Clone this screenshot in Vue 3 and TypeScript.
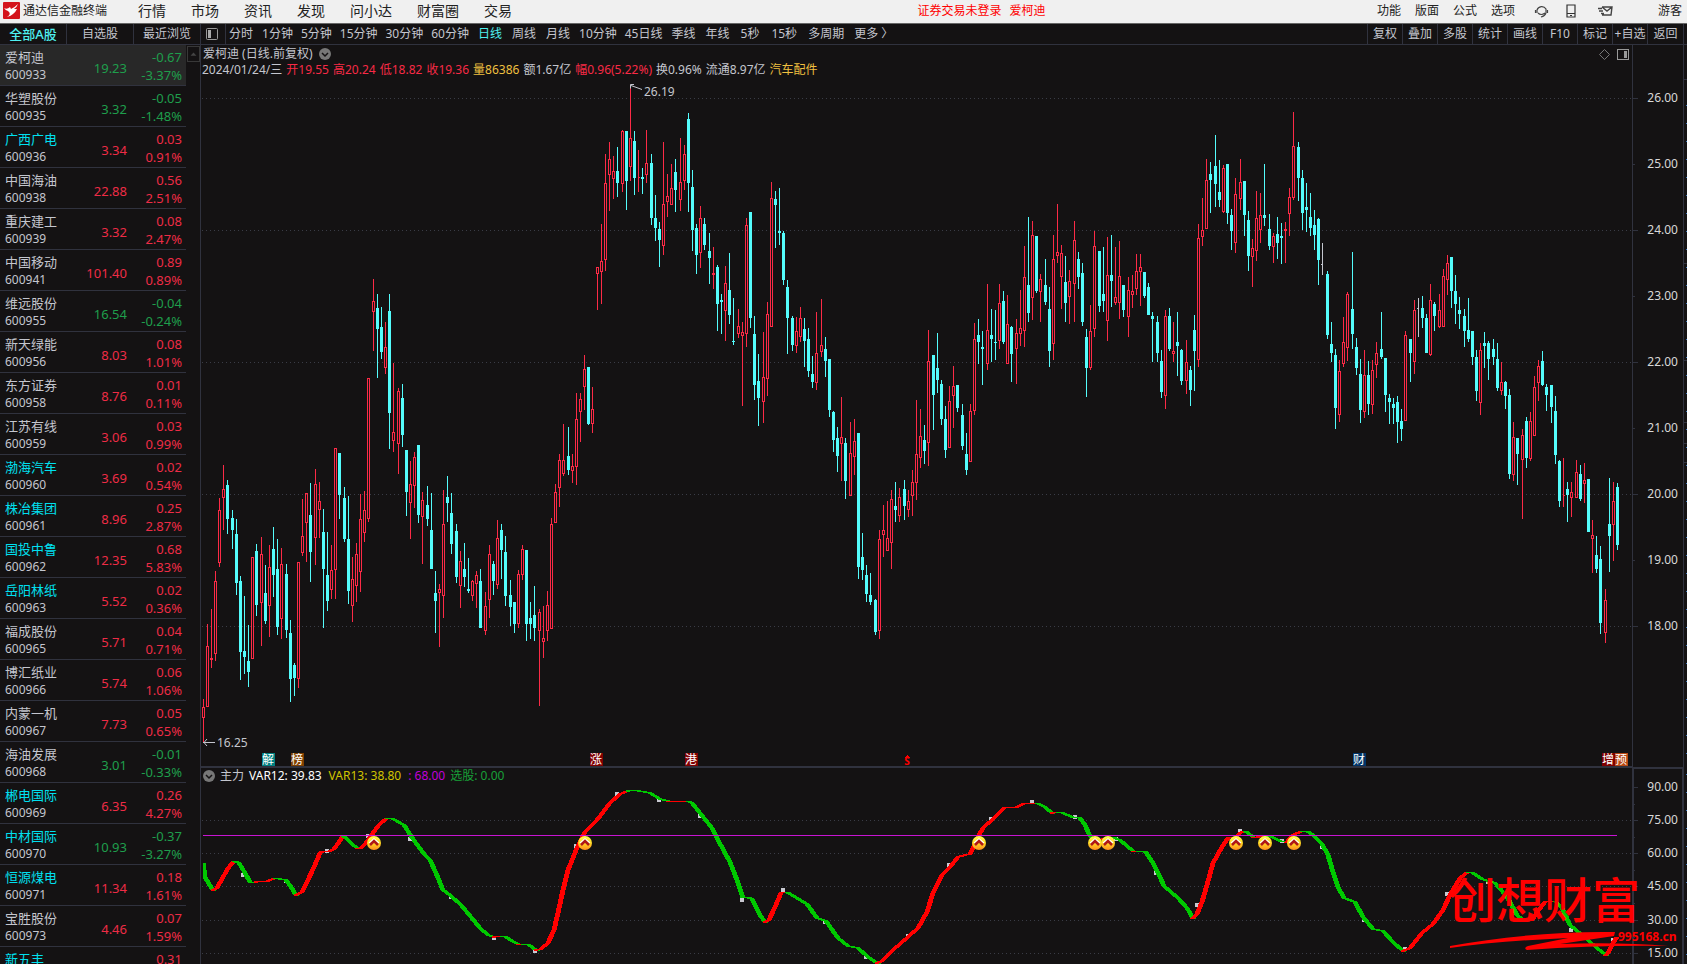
<script setup lang="ts">
interface Stock { name: string; code: string; price: string; diff: string; pct: string; own?: boolean }
interface Badge { x: number; text: string; cls: string }
interface Stroke { kind: string; d: string }

const menus = ['行情', '市场', '资讯', '发现', '问小达', '财富圈', '交易']
const tools = ['功能', '版面', '公式', '选项']
const tabs = ['全部A股', '自选股', '最近浏览']
const periods = ['分时', '1分钟', '5分钟', '15分钟', '30分钟', '60分钟', '日线', '周线', '月线', '10分钟', '45日线', '季线', '年线', '5秒', '15秒', '多周期', '更多 〉']
const actions = ['复权', '叠加', '多股', '统计', '画线', 'F10', '标记', '+自选', '返回']

const periodClass = (p: string): string => {
  if (p.endsWith('秒')) return 'sec'
  return /\d/.test(p) ? '' : 'word'
}

const stockRows = `爱柯迪 600933 19.23 -0.67 -3.37%
华塑股份 600935 3.32 -0.05 -1.48%
广西广电 600936 3.34 0.03 0.91% *
中国海油 600938 22.88 0.56 2.51%
重庆建工 600939 3.32 0.08 2.47%
中国移动 600941 101.40 0.89 0.89%
维远股份 600955 16.54 -0.04 -0.24%
新天绿能 600956 8.03 0.08 1.01%
东方证券 600958 8.76 0.01 0.11%
江苏有线 600959 3.06 0.03 0.99%
渤海汽车 600960 3.69 0.02 0.54% *
株冶集团 600961 8.96 0.25 2.87% *
国投中鲁 600962 12.35 0.68 5.83% *
岳阳林纸 600963 5.52 0.02 0.36% *
福成股份 600965 5.71 0.04 0.71%
博汇纸业 600966 5.74 0.06 1.06%
内蒙一机 600967 7.73 0.05 0.65%
海油发展 600968 3.01 -0.01 -0.33%
郴电国际 600969 6.35 0.26 4.27% *
中材国际 600970 10.93 -0.37 -3.27% *
恒源煤电 600971 11.34 0.18 1.61% *
宝胜股份 600973 4.46 0.07 1.59%`
const stocks: Stock[] = stockRows.split('\n').map((line) => {
  const [name, code, price, diff, pct, mark] = line.split(' ')
  return { name, code, price, diff, pct, own: mark === '*' }
})
stocks.push({ name: '新五丰', code: '', price: '', diff: '0.31', pct: '', own: true })

const quote = [
  { t: '2024/01/24/三', c: 'plain' }, { t: '开19.55', c: 'up' }, { t: '高20.24', c: 'up' }, { t: '低18.82', c: 'up' },
  { t: '收19.36', c: 'up' }, { t: '量86386', c: 'gold' }, { t: '额1.67亿', c: 'plain' }, { t: '幅0.96(5.22%)', c: 'up' },
  { t: '换0.96%', c: 'plain' }, { t: '流通8.97亿', c: 'plain' }, { t: '汽车配件', c: 'gold' },
]

/* x, high, body top, body bottom, low, direction (u up, d down, f flat) */
const candles = `203 699 707 718 743 u,207 624 646 707 707 u,211 609 658 660 668 u,215 571 581 654 661 u,219 498 510 563 567 u
223 465 489 498 530 u,227 480 485 519 534 d,232 510 518 530 549 d,236 519 534 583 595 d,240 576 581 652 680 d
244 596 651 657 674 d,248 625 661 672 687 d,252 557 557 659 659 u,256 544 551 605 616 d,261 537 554 603 646 u
265 565 593 621 624 d,269 545 567 606 637 u,273 527 549 575 597 d,277 539 569 627 635 d,281 548 564 619 639 u
286 564 574 630 638 d,290 620 633 679 702 d,294 663 665 678 696 d,298 562 562 679 688 u,302 499 536 553 556 u
306 493 493 523 562 u,310 483 515 552 582 d,315 469 484 538 565 u,319 482 501 510 538 u,323 509 532 569 628 d
327 532 575 601 611 d,331 545 570 590 599 u,335 448 448 570 599 u,339 453 453 495 519 d,344 487 498 539 542 d
348 496 539 591 604 d,352 557 579 606 622 u,356 543 554 586 602 u,360 494 519 572 592 u,364 491 510 533 542 u
368 378 378 519 522 u,373 279 301 312 351 u,377 294 308 329 378 d,381 307 327 352 359 d,385 322 347 368 374 u
389 294 311 413 449 d,393 363 432 441 452 u,398 388 391 444 474 u,402 384 398 435 447 d,406 450 450 492 516 d
410 461 484 503 539 u,414 452 457 486 508 u,418 445 445 515 523 d,422 492 500 517 564 u,427 486 505 519 526 d
431 493 530 569 569 d,435 571 593 601 633 d,439 584 589 593 647 u,443 490 524 596 618 u,447 476 497 503 522 d
451 493 513 544 554 d,456 524 531 577 583 d,460 551 561 586 608 u,464 543 569 577 587 d,468 558 589 591 593 d
472 580 581 596 601 u,476 571 575 584 608 u,480 569 581 628 628 d,485 592 606 631 635 u,489 545 554 600 618 u
493 561 564 581 595 d,497 520 538 585 589 u,501 524 530 550 579 d,505 536 552 596 606 d,510 580 595 607 626 d
514 602 602 624 633 d,518 570 574 624 628 u,522 545 549 575 580 u,526 550 550 624 641 d,530 602 618 624 639 d
534 586 615 628 641 d,539 609 612 631 706 u,543 606 638 642 658 u,547 591 605 631 641 u,551 518 524 629 629 u
555 484 492 523 523 u,559 454 460 488 507 u,563 424 460 474 476 u,568 427 456 470 475 d,572 454 466 471 483 u
576 393 419 467 485 u,580 393 399 412 442 u,584 355 369 387 410 u,588 367 367 424 425 d,592 387 409 424 433 u
597 267 267 274 310 u,601 224 261 272 304 u,605 154 183 260 271 u,609 142 159 175 211 u,613 156 171 179 199 u
617 147 171 183 197 d,622 130 131 184 192 u,626 131 131 181 210 d,630 87 138 167 181 u,634 131 141 178 195 d
638 150 177 178 192 u,642 168 177 179 194 d,646 130 163 175 183 u,651 154 163 218 225 d,655 195 218 228 241 d
659 222 229 240 267 d,663 142 204 246 255 u,667 174 196 202 217 u,671 164 188 205 205 u,675 159 172 190 212 d
680 138 182 200 211 u,684 145 154 181 190 u,688 113 119 183 212 d,692 170 187 230 251 d,696 224 228 255 274 d
700 206 218 253 268 u,704 218 224 245 250 d,709 233 251 258 284 d,713 247 273 275 289 u,717 265 267 304 331 d
721 294 300 302 334 d,725 266 283 311 341 u,729 253 290 315 324 d,733 298 341 342 345 d,738 309 326 334 338 u
742 322 332 336 406 u,746 218 225 334 347 u,750 212 212 318 328 d,754 316 334 385 400 d,758 354 381 398 426 d
763 332 377 402 423 u,767 302 314 379 396 u,771 182 198 327 327 u,775 191 199 205 248 d,779 188 231 233 245 d
783 231 233 280 285 d,787 280 287 318 354 d,792 316 318 345 351 d,796 317 331 346 353 u,800 307 318 337 342 u
804 318 329 341 367 d,808 328 339 371 377 d,812 356 374 382 388 d,816 312 353 383 390 u,821 299 345 352 357 u
825 337 349 361 377 d,829 359 359 410 417 d,833 411 412 440 452 d,837 427 438 456 472 d,841 397 437 444 481 u
845 438 443 481 499 d,850 422 453 496 496 u,854 419 441 457 475 u,858 433 433 567 579 d,862 533 557 570 580 d
866 565 575 594 602 d,870 573 595 602 605 d,875 599 600 632 635 d,879 530 539 631 639 u,883 505 530 535 557 u
887 501 538 551 551 u,891 490 499 543 569 u,895 482 506 510 522 d,899 488 497 516 522 u,904 480 489 506 520 d
908 490 501 510 517 u,912 470 482 496 516 u,916 400 454 483 500 u,920 409 436 458 468 u,924 425 440 451 464 d
928 330 361 443 466 u,933 355 355 395 430 d,937 333 368 380 393 d,941 380 384 419 425 d,945 406 419 450 458 d
949 386 401 448 448 u,953 366 386 396 428 u,957 385 385 408 412 d,962 404 415 446 450 d,966 433 454 470 475 d
970 404 411 462 462 u,974 323 339 411 415 u,978 319 335 342 364 d,982 331 347 349 385 d,987 284 330 364 370 u
991 309 335 339 362 d,995 310 342 343 360 d,999 284 303 341 349 u,1003 291 301 342 344 d,1007 295 324 364 364 u
1011 326 327 354 382 d,1016 319 333 349 384 u,1020 290 328 334 346 u,1024 246 277 331 347 u,1028 217 285 313 322 d
1032 221 235 298 320 u,1036 236 236 291 293 d,1040 274 279 292 322 u,1045 259 285 302 305 d,1049 287 309 351 367 d
1053 235 259 344 360 u,1057 204 252 256 263 u,1061 245 253 277 309 u,1065 256 282 303 322 d,1069 270 281 297 324 u
1074 221 240 284 322 u,1078 252 259 277 289 d,1082 263 273 322 326 d,1086 329 337 368 397 d,1090 305 331 368 370 u
1094 231 246 329 337 u,1099 251 251 306 312 d,1103 247 294 301 312 d,1107 237 275 321 341 u,1111 235 275 281 307 d
1115 247 297 303 305 u,1119 241 276 303 319 u,1123 285 285 310 317 d,1128 277 290 317 337 u,1132 275 291 295 308 u
1136 254 271 289 295 u,1140 254 267 272 306 u,1144 272 272 296 298 d,1148 283 287 315 315 d,1152 312 316 319 362 d
1157 316 322 353 362 d,1161 350 361 392 398 d,1165 310 316 396 409 u,1169 308 316 349 351 d,1173 322 351 354 362 u
1177 312 342 346 376 d,1181 349 350 381 385 d,1186 340 362 381 394 u,1190 366 370 390 406 d,1194 315 330 351 391 d
1198 224 238 360 367 u,1202 198 230 237 246 u,1206 159 180 229 229 u,1210 162 174 180 213 d,1215 135 166 184 207 d
1219 160 192 200 207 d,1223 165 168 212 213 u,1227 164 164 213 224 d,1231 209 215 231 250 d,1235 178 194 243 253 u
1240 159 182 199 210 u,1244 181 181 215 236 d,1248 211 220 256 271 d,1252 239 248 257 287 u,1256 191 218 251 261 u
1260 193 215 230 243 u,1264 164 215 218 226 d,1269 214 229 246 250 d,1273 233 236 247 263 u,1277 217 234 243 259 d
1281 223 236 238 264 d,1285 222 229 231 263 u,1289 188 197 214 236 u,1293 112 146 198 200 u,1298 142 147 178 201 d
1302 170 178 213 230 d,1306 183 207 210 232 d,1310 193 217 228 236 d,1314 210 225 235 250 d,1318 218 219 260 285 d
1322 243 264 265 275 f,1327 271 274 335 339 d,1331 322 344 353 362 d,1335 349 355 408 429 d,1339 360 371 415 422 u
1343 317 342 364 367 u,1347 292 294 348 361 u,1352 252 309 334 349 d,1356 338 347 368 375 d,1360 359 374 410 423 d
1364 350 375 412 418 u,1368 361 375 404 415 d,1372 360 370 405 414 u,1376 342 353 365 378 u,1381 312 349 357 359 d
1385 358 358 395 412 d,1389 394 398 402 424 d,1393 398 404 408 424 d,1397 396 402 422 443 d,1401 409 421 429 441 d
1405 331 335 421 421 u,1410 339 339 353 382 d,1414 300 310 362 374 u,1418 298 308 309 337 f,1422 296 308 318 328 d
1426 314 318 353 353 d,1430 284 300 355 356 u,1434 302 304 316 331 d,1439 294 310 327 328 u,1443 269 276 327 327 u
1447 255 263 280 295 u,1451 257 257 291 308 d,1455 275 291 304 324 d,1459 297 310 314 329 d,1464 309 316 331 347 d
1468 298 330 339 342 d,1472 331 331 357 365 d,1476 350 357 391 401 d,1480 343 350 403 415 u,1484 332 343 346 368 d
1488 341 343 359 380 d,1493 339 349 357 365 d,1497 343 359 388 391 d,1501 362 382 391 395 u,1505 381 382 396 409 d
1509 389 395 474 479 d,1513 422 437 475 481 u,1517 438 438 454 485 d,1522 429 435 460 519 u,1526 417 421 458 468 d
1530 412 421 459 461 u,1534 376 387 436 436 u,1538 360 366 383 401 u,1542 351 361 385 386 d,1546 384 387 395 411 d
1551 385 385 407 423 d,1555 396 411 455 464 d,1559 460 461 501 507 d,1563 458 495 496 507 u,1567 482 489 495 522 d
1571 482 492 498 517 u,1576 460 472 498 498 u,1580 465 474 499 501 d,1584 463 480 484 503 u,1588 479 479 532 532 d
1592 520 535 539 573 u,1596 536 555 569 573 d,1600 546 559 623 634 d,1605 589 600 633 643 u,1609 478 524 536 572 d
1613 482 501 525 561 u,1617 483 487 545 550 d`

const paths = { up: '', wick: '', body: '', flat: '' }
for (const row of candles.split(/[,\n]/)) {
  const parts = row.split(' ')
  const [x, high, top, bottom, low] = parts.map(Number)
  const mid = x + 0.5
  if (parts[5] === 'u') {
    const inner = Math.max(bottom - top - 1, 0)
    paths.up += `M${mid} ${high}V${top}M${mid} ${bottom}V${low}M${x - 0.5} ${top + 0.5}h2v${inner}h-2z`
  } else if (parts[5] === 'd') {
    paths.wick += `M${mid} ${high}V${low}`
    paths.body += `M${mid} ${top}V${bottom}`
  } else {
    paths.flat += `M${mid} ${high}V${low}M${x - 1} ${top + 0.5}h2`
  }
}

const priceAxis = Array.from({ length: 9 }, (_, i) => ({ y: 98 + i * 66, label: (26 - i).toFixed(2), major: i % 2 === 0 }))
const levels = [
  { y: 787, v: '90.00' }, { y: 820, v: '75.00' }, { y: 853, v: '60.00' },
  { y: 886, v: '45.00' }, { y: 920, v: '30.00' }, { y: 953, v: '15.00' },
]

const badges: Badge[] = [
  { x: 262, text: '解', cls: 'teal' }, { x: 291, text: '榜', cls: 'brown' }, { x: 590, text: '涨', cls: 'maroon' },
  { x: 685, text: '港', cls: 'maroon' }, { x: 1353, text: '财', cls: 'navy' }, { x: 1602, text: '增', cls: 'maroon' },
  { x: 1615, text: '预', cls: 'orange' },
]

/* Runs of the momentum curve: g falling, r rising */
const runs = `g 203,863 205,877 209,884 213,890
r 217,888 223,877 229,867 234,861
g 239,863 245,873 250,882 256,882
r 261,881 268,881 275,878
g 280,879 286,880 291,887 296,895
r 302,892 307,882 314,867 320,853 323,851 330,851 334,849 339,842 343,836
g 346,838 352,844 357,848
r 361,848 366,843 373,833 379,825 387,818
g 393,819 404,825 411,836 418,846 425,855 430,860 436,873 443,890 450,895 461,905 471,917 480,928 488,935 494,937
r 502,936
g 506,937 512,941 518,944
r 523,944
g 529,945 536,950
r 541,949 548,943 554,930 558,913 563,890 568,870 577,848 585,832 597,820 610,803 620,794 628,791
g 634,790 650,793 660,799 668,801
r 680,801 688,801
g 692,803 700,813 712,828 718,840 730,862 737,880 743,898 747,897 752,899 760,915 765,922
r 769,920 775,907 781,893 787,892
g 790,894 807,904 817,918 826,921 838,938 848,946 858,948 868,957 877,963
r 882,961 893,950 908,937 918,928 927,912 933,893 942,875 950,867 958,857 965,855 970,854 973,848 979,835 983,828 993,819 1005,807 1017,807 1023,804 1037,803
g 1045,807 1052,813
r 1058,812
g 1063,813 1072,817 1080,818 1085,825 1090,836 1095,840
r 1103,839 1112,837
g 1120,840 1127,846 1133,851
r 1138,851
g 1145,851 1153,863 1160,877 1164,886 1178,898 1187,908 1193,918
r 1197,914 1202,902 1207,885 1213,863 1222,847 1228,838 1236,837 1240,833 1245,831
g 1248,833 1253,837
r 1258,837 1265,836
g 1272,837 1280,841 1287,842
r 1293,835 1302,831
g 1307,831 1313,835 1322,844 1328,855 1333,872 1338,887 1344,898 1355,902 1363,917 1373,929 1383,931 1393,942 1403,951
r 1410,948 1422,933 1433,924 1443,910 1450,895 1460,878 1468,872
g 1473,873 1482,879 1495,883 1503,892 1510,902 1517,915 1523,920
r 1532,920 1538,911 1545,902 1555,901
g 1562,908 1570,925 1582,935 1597,948 1606,955
r 1608,953 1613,943 1617,937`
const strokes: Stroke[] = []
let last: number[] | null = null
for (const line of runs.split('\n')) {
  const [kind, ...rest] = line.split(' ')
  const pts = rest.map((p) => p.split(',').map(Number))
  const all = last ? [last, ...pts] : pts
  const left = all.map(([x, y]) => `${Math.max(x - 2, 203)},${y}`)
  const right = all.map(([x, y]) => `${x + 2},${y}`).reverse()
  strokes.push({ kind, d: `M${left.join('L')}L${right.join('L')}z` })
  last = pts[pts.length - 1]
}

const knots = [
  [243, 875], [286, 881], [327, 851], [368, 836], [410, 839], [451, 897], [494, 938], [535, 951], [576, 846], [617, 794],
  [659, 800], [700, 816], [742, 900], [783, 890], [825, 922], [866, 957], [908, 936], [949, 865], [991, 819], [1032, 802],
  [1075, 817], [1116, 839], [1156, 873], [1197, 905], [1240, 831], [1282, 841], [1322, 847], [1364, 920], [1405, 949],
  [1447, 894], [1488, 882], [1530, 919], [1571, 930], [1613, 940],
]
const signals = [374, 585, 979, 1095, 1108, 1236, 1265, 1294]
</script>

<template>
  <div class="terminal">
    <header class="top">
      <svg class="logo" viewBox="0 0 17 17" width="17" height="17" aria-hidden="true">
        <rect width="17" height="17" rx="1" fill="#d4141c" />
        <path d="M1 6Q4 8 7 5L8 7Q11 6 15 2Q14 5 11 7L14 7Q12 11 10 12Q8 14 4 15Q9 12 5 9Q3 9 1 6Z" fill="#fff" />
      </svg>
      <h1>通达信金融终端</h1>
      <nav class="menus"><button v-for="m in menus" :key="m" type="button">{{ m }}</button></nav>
      <p class="notice"><span>证券交易未登录</span><span>爱柯迪</span></p>
      <nav class="tools">
        <button v-for="t in tools" :key="t" type="button">{{ t }}</button>
        <button class="headset" type="button" aria-label="客服">
          <svg viewBox="0 0 15 14" width="15" height="14"><path d="M3 9V6A5 5 0 0 1 12 5V9M1.500 6v3M13.500 6v3M4 9q3 3 7 0M12 9q-1 3-5 4" fill="none" stroke="#444" stroke-width="1.200" /></svg>
        </button>
        <button class="phone" type="button" aria-label="手机">
          <svg viewBox="0 0 10 14" width="10" height="14"><path d="M1 1h8v12h-8zM1 9.500h8M4 11.500h2" fill="none" stroke="#333" stroke-width="1.200" /></svg>
        </button>
        <button class="mail" type="button" aria-label="邮件">
          <svg viewBox="0 0 15 12" width="15" height="12"><path d="M4 2h10l-1 8H4M4 2l5 4 5-4M0 3.500h4M1 6h4M3 8.500h3" fill="none" stroke="#444" stroke-width="1.400" /></svg>
        </button>
        <button class="guest" type="button">游客</button>
      </nav>
    </header>

    <div class="bar">
      <nav class="tabs"><button v-for="(t, i) in tabs" :key="t" type="button" :class="{ on: i === 0 }">{{ t }}</button></nav>
      <button class="pane" type="button" aria-label="侧栏">
        <svg viewBox="0 0 12 12" width="12" height="12"><rect x="0.500" y="0.500" width="11" height="11" rx="1" fill="none" stroke="#999" /><rect x="2" y="2" width="3" height="8" fill="#aaa" /></svg>
      </button>
      <nav class="periods"><button v-for="p in periods" :key="p" type="button" :class="[periodClass(p), { on: p === '日线' }]">{{ p }}</button></nav>
      <nav class="actions"><button v-for="a in actions" :key="a" type="button">{{ a }}</button></nav>
    </div>

    <div class="body">
      <aside class="side">
        <table>
          <tbody>
            <tr v-for="(s, i) in stocks" :key="s.name" :class="{ picked: i === 0, fall: s.diff.startsWith('-') }">
              <td class="who"><span :class="{ own: s.own }">{{ s.name }}</span><span class="code">{{ s.code }}</span></td>
              <td class="num price">{{ s.price }}</td>
              <td class="num"><span>{{ s.diff }}</span><span>{{ s.pct }}</span></td>
            </tr>
          </tbody>
        </table>
        <button class="scroll" type="button" aria-label="向上"><svg viewBox="0 0 13 15" width="13" height="15"><path d="M3 9L6.500 5L10 9Z" fill="#444" /></svg></button>
      </aside>

      <main class="charts">
        <section class="panel">
          <div class="title">
            <h2>爱柯迪 (日线.前复权)</h2>
            <button type="button" aria-label="展开"><svg viewBox="0 0 12 12" width="12" height="12"><circle cx="6" cy="6" r="6" fill="#777" /><path d="M3 5l3 3 3-3" fill="none" stroke="#141213" stroke-width="1.500" /></svg></button>
          </div>
          <p class="quote"><span v-for="q in quote" :key="q.t" :class="q.c">{{ q.t }}</span></p>
          <svg class="plot" viewBox="201 45 1486 722" shape-rendering="crispEdges">
            <g class="grid">
              <path v-for="a in priceAxis.filter((p) => p.major)" :key="a.y" :d="`M202 ${a.y + 0.5}H1632`" />
            </g>
            <path class="rule" d="M1632.500 45V767M1683.500 45V767M201 766.500H1632" />
            <g v-for="a in priceAxis" :key="a.label">
              <path class="rule" :d="`M1633 ${a.y + 0.5}h${a.major ? 5 : 2}`" />
              <text class="axis" x="1678" :y="a.y + 4">{{ a.label }}</text>
            </g>
            <path class="dots" d="M1686.500 105V767" />
            <path class="rule" d="M1684 79.500h3M1684 263.500h3M1684 360.500h3M1684 422.500h3M1684 443.500h3M1684 462.500h3" />
            <path class="up-line" :d="paths.up" />
            <path class="down-line" :d="paths.wick" />
            <path class="down-body" :d="paths.body" />
            <path class="flat-line" :d="paths.flat" />
            <path class="flat-line" shape-rendering="auto" d="M634 84.500h-3.500v4M631 85.500l11 4M203 742.500h12M207 739l-3 3.500l3 3.500" />
            <text class="mark" x="644" y="96">26.19</text>
            <text class="mark" x="217" y="747">16.25</text>
            <g v-for="b in badges" :key="b.x" :class="b.cls">
              <rect :x="b.x" y="753" width="13" height="13" />
              <text class="badge" :x="b.x + 6" y="764">{{ b.text }}</text>
            </g>
            <path d="M904 758l3-3 3 3z" fill="#f00" />
            <text class="split" x="907" y="765">S</text>
            <path d="M1604.500 49.500l5 5-5 5-5-5z" fill="none" stroke="#777" shape-rendering="auto" />
            <rect x="1617.500" y="49.500" width="11" height="10" rx="1" fill="none" stroke="#999" />
            <rect x="1624" y="51" width="3" height="7" fill="#999" />
          </svg>
        </section>

        <section class="panel">
          <div class="title study">
            <button type="button" aria-label="指标"><svg viewBox="0 0 12 12" width="12" height="12"><circle cx="6" cy="6" r="6" fill="#777" /><path d="M3 5l3 3 3-3" fill="none" stroke="#141213" stroke-width="1.500" /></svg></button>
            <span class="plain">主力</span><span class="white">VAR12: 39.83</span><span class="yellow">VAR13: 38.80</span><span class="violet">: 68.00</span><span class="green">选股: 0.00</span>
          </div>
          <svg class="plot" viewBox="201 767 1486 197" shape-rendering="crispEdges">
            <defs>
              <linearGradient id="coin" x1="0" y1="0" x2="0" y2="1"><stop offset="0" stop-color="#ffff50" /><stop offset="0.500" stop-color="#ffd820" /><stop offset="1" stop-color="#ff8c20" /></linearGradient>
            </defs>
            <path class="grid" v-for="l in levels.slice(1)" :key="l.y" :d="`M202 ${l.y + 0.5}H1632`" />
            <path class="rule" d="M201 767.500H1632" />
            <path class="rule thick" d="M1633 964V768H1683V964" />
            <g v-for="l in levels" :key="l.v">
              <path class="rule" :d="`M1634 ${l.y + 0.5}h4M1634 ${l.y + 17.5}h1`" />
              <text class="axis" x="1678" :y="l.y + 4">{{ l.v }}</text>
            </g>
            <path class="dots" d="M1686.500 774V964" />
            <rect v-for="k in knots" :key="k[0]" :x="k[0] - 2" :y="k[1] - 2" width="4" height="4" fill="#c8c8d0" />
            <path v-for="(s, i) in strokes" :key="i" :class="['curve', s.kind]" :d="s.d" />
            <path d="M203 835.500H1617" stroke="#c814d2" />
            <g v-for="x in signals" :key="x" shape-rendering="auto">
              <circle :cx="x" cy="843" r="7" fill="url(#coin)" />
              <path :d="`M${x - 5} 843l5-4 5 4`" fill="none" stroke="#fff" stroke-width="1.500" />
              <path :d="`M${x - 4} 845l4-4 4 4`" fill="none" stroke="#b01818" stroke-width="2.500" />
            </g>
            <g class="brand" shape-rendering="auto">
              <text class="big" x="1448" y="918">创想财富</text>
              <path d="M1450 946C1500 937 1560 931 1615 932L1614 936L1560 944Q1620 942 1668 946Q1600 945 1527 950Q1523 948 1528 946L1568 938Q1500 941 1450 948Z" />
              <text class="site" x="1618" y="941">995168.cn</text>
            </g>
          </svg>
        </section>
      </main>
    </div>
  </div>
</template>

<style>
body { margin: 0; background: #141213; overflow: hidden; }
</style>

<style scoped>
.terminal { height: 100vh; display: flex; flex-direction: column; overflow: hidden; background: #141213; color: #c4c6ce; font: 12px/16px "Noto Sans", "Noto Sans CJK SC", sans-serif; }
button { border: 0; padding: 0; margin: 0; background: none; color: inherit; font: inherit; white-space: nowrap; }
button svg { display: block; }
h1, h2, p { margin: 0; font-size: 12px; font-weight: 400; white-space: nowrap; }
.top { flex: none; box-sizing: border-box; height: 24px; display: flex; align-items: center; background: #f0f0f0; color: #222; border-bottom: 1px solid #666; padding: 0 5px 2px 3px; }
.top h1 { margin-left: 3px; }
.menus { display: flex; gap: 25px; margin-left: 31px; font-size: 14px; }
.notice { flex: 1; display: flex; justify-content: center; gap: 8px; padding-left: 74px; color: #f00; }
.tools { display: flex; align-items: center; gap: 14px; }
.headset { margin-left: 5px; }
.phone { margin-left: 3px; }
.mail { margin-left: 8px; }
.guest { margin-left: 31px; }

.bar { flex: none; box-sizing: border-box; height: 21px; display: flex; border-bottom: 1px solid #30323e; }
.tabs { box-sizing: border-box; width: 201px; display: flex; border-right: 1px solid #30323e; }
.tabs button { flex: 1; }
.tabs button + button { border-left: 1px solid #30323e; }
.tabs .on { font-size: 13px; font-weight: 500; }
.on { color: #4ff0f0; }
.pane { padding: 0 7px 0 5px; border-right: 1px solid #30323e; }
.periods { flex: 1; display: flex; gap: 8px; padding-left: 2px; }
.periods .word { padding: 0 1px; }
.periods .sec { padding: 0 2px; }
.actions { display: flex; }
.actions button { box-sizing: border-box; width: 35px; border-left: 1px solid #30323e; }
.actions button:last-child { width: 37px; border-right: 1px solid #30323e; margin-right: 3px; }

.body { flex: 1; min-height: 0; display: flex; }
.side { flex: none; box-sizing: border-box; width: 201px; display: flex; align-items: flex-start; border-right: 1px solid #30323e; }
table { width: 186px; table-layout: fixed; border-collapse: separate; border-spacing: 0; }
td { box-sizing: border-box; height: 41px; padding: 3px 0 1px; border-bottom: 1px solid #30323e; vertical-align: top; }
td span { display: block; height: 18px; line-height: 18px; white-space: nowrap; }
.who { width: 70px; padding-left: 5px; font-size: 13px; }
.who .code { font-size: 12px; }
.own { color: #00e0f0; }
.num { padding-right: 4px; text-align: right; font-size: 13px; color: #ee2c46; }
.price { width: 57px; padding: 5px 0 0; vertical-align: middle; }
.fall .num { color: #1f9e4c; }
.picked td { background: #282828; }
.scroll { box-sizing: border-box; width: 13px; height: 16px; margin: 1px 0 0 1px; border: 1px solid #383838; display: flex; justify-content: center; }

.charts { flex: 1; min-width: 0; overflow: hidden; }
.panel { position: relative; }
.plot { display: block; width: 100%; height: auto; }
.title { position: absolute; left: 2px; top: 1px; display: flex; align-items: center; gap: 6px; }
.quote { position: absolute; left: 1px; top: 17px; display: flex; gap: 4px; }
.plain { color: #c4c6ce; }
.up { color: #f82a46; }
.gold { color: #f0c040; }
.white { color: #fff; }
.yellow { color: #d0c400; }
.violet { color: #c000d8; }
.green { color: #18a038; }
.study { gap: 5px; }
.study .white, .study .yellow { margin-right: 2px; }

.grid, .grid path { stroke: #3a3c46; stroke-dasharray: 1 3; fill: none; }
.rule { stroke: #30323e; fill: none; }
.thick { stroke-width: 2; }
.dots { stroke: #3a78c0; stroke-dasharray: 1 17; fill: none; }
.axis { fill: #d8d8d8; text-anchor: end; }
.mark { fill: #c4c6ce; }
.up-line { stroke: #fc2a46; fill: none; }
.down-line { stroke: #54fcfc; fill: none; }
.down-body { stroke: #54fcfc; stroke-width: 3; fill: none; }
.flat-line { stroke: #c4c6ce; fill: none; }
.badge { fill: #fff; text-anchor: middle; }
.teal rect { fill: #008080; }
.brown rect { fill: #804000; }
.maroon rect { fill: #800000; }
.navy rect { fill: #003468; }
.orange rect { fill: #b84814; }
.split { fill: #f00; text-anchor: middle; font-size: 10px; font-weight: 700; }
.curve.r { fill: #f00; stroke: #f00; }
.curve.g { fill: #00c800; stroke: #00c800; }
.brand { fill: #f00; }
.big { font-size: 48px; font-style: oblique 8deg; font-weight: 500; }
.site { font-size: 12px; font-weight: 700; }
</style>
